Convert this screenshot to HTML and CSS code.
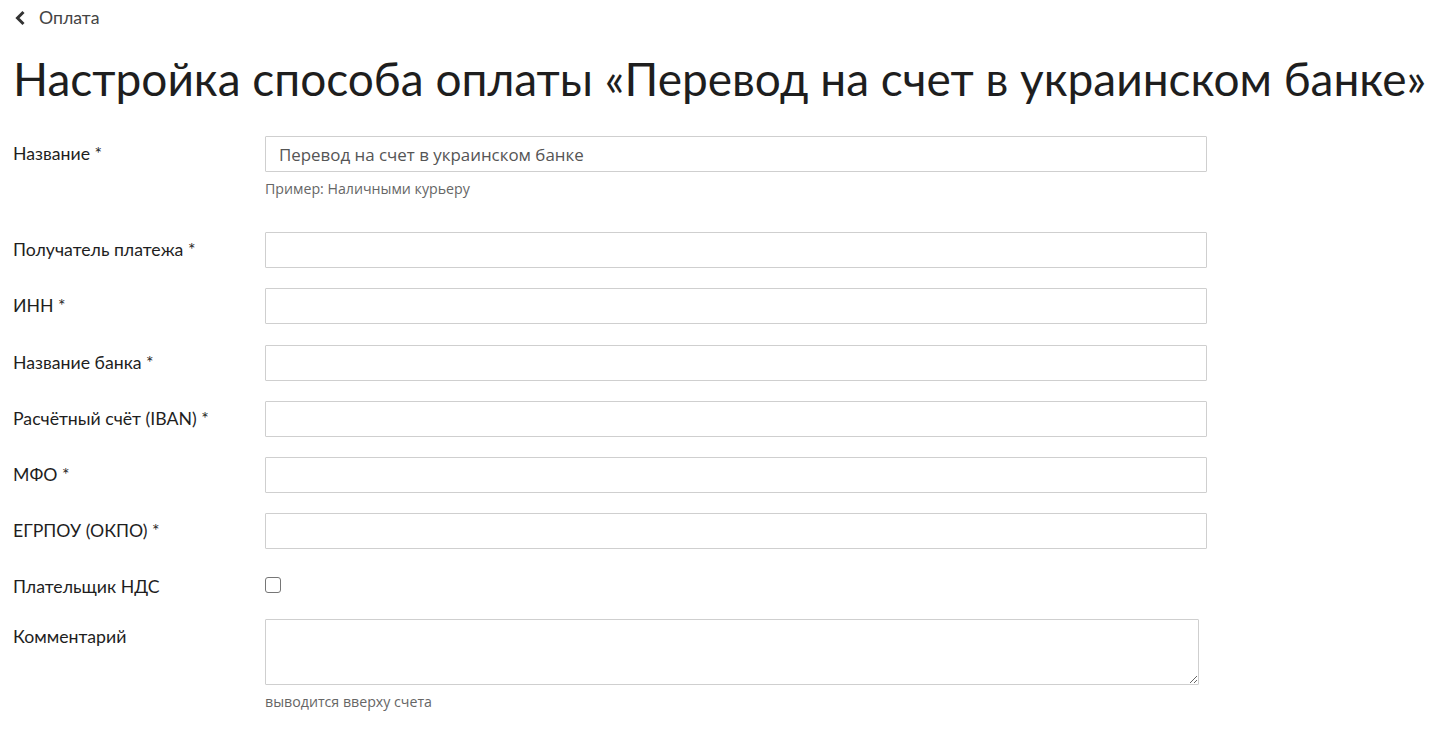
FILE: index.html
```html
<!DOCTYPE html>
<html lang="ru">
<head>
<meta charset="utf-8">
<title>Настройка способа оплаты</title>
<link rel="stylesheet" href="styles.css">
</head>
<body>
<div class="page">
  <a class="back" href="#">
    <svg class="back-icon" width="12" height="16" viewBox="0 0 12 16"><path d="M9.5 2 L3.5 8 L9.5 14" fill="none" stroke="#333" stroke-width="3" stroke-linejoin="miter"/></svg>
    <span>Оплата</span>
  </a>
  <h1 class="title">Настройка способа оплаты «Перевод на счет в украинском банке»</h1>
  <form class="form">
    <div class="row">
      <label class="label">Название *</label>
      <div class="field">
        <input class="input" type="text" value="Перевод на счет в украинском банке">
        <div class="hint hint-first">Пример: Наличными курьеру</div>
      </div>
    </div>
    <div class="row">
      <label class="label">Получатель платежа *</label>
      <div class="field"><input class="input" type="text"></div>
    </div>
    <div class="row">
      <label class="label">ИНН *</label>
      <div class="field"><input class="input" type="text"></div>
    </div>
    <div class="row">
      <label class="label">Название банка *</label>
      <div class="field"><input class="input" type="text"></div>
    </div>
    <div class="row">
      <label class="label">Расчётный счёт (IBAN) *</label>
      <div class="field"><input class="input" type="text"></div>
    </div>
    <div class="row">
      <label class="label">МФО *</label>
      <div class="field"><input class="input" type="text"></div>
    </div>
    <div class="row">
      <label class="label">ЕГРПОУ (ОКПО) *</label>
      <div class="field"><input class="input" type="text"></div>
    </div>
    <div class="row row-check">
      <label class="label">Плательщик НДС</label>
      <div class="field field-check"><span class="checkbox"></span></div>
    </div>
    <div class="row">
      <label class="label">Комментарий</label>
      <div class="field">
        <textarea class="textarea"></textarea>
        <div class="hint">выводится вверху счета</div>
      </div>
    </div>
  </form>
</div>
</body>
</html>
```
FILE: styles.css
```css
html, body {
  margin: 0;
  padding: 0;
  background: #fff;
}
body {
  font-family: Lato, "Open Sans", sans-serif;
  color: #222;
}
.page {
  padding: 5px 0 0 13px;
}
.back {
  display: inline-flex;
  align-items: center;
  gap: 13px;
  color: #444;
  text-decoration: none;
  font-size: 17.7px;
  line-height: 26px;
}
.back-icon {
  display: block;
  margin-left: 1px;
}
.title {
  font-weight: 400;
  font-size: 46px;
  line-height: 56px;
  margin: 20px 0 29px;
  color: #1e1e1e;
  white-space: nowrap;
}
.form {
  width: 1194px;
}
.row {
  display: flex;
  margin-bottom: 20.2px;
}
.label {
  width: 252px;
  flex: none;
  font-size: 17.7px;
  line-height: 36px;
  color: #1e1e1e;
}
.field {
  width: 942px;
}
.input {
  display: block;
  box-sizing: border-box;
  width: 942px;
  height: 36px;
  border: 1px solid #cfcfcf;
  border-radius: 1px;
  padding: 0 13px;
  font-family: "Open Sans", sans-serif;
  font-size: 16.9px;
  color: #555;
  background: #fff;
  outline: none;
}
.hint {
  font-family: "Open Sans", sans-serif;
  font-size: 14.2px;
  color: #666;
  line-height: 18px;
  margin-top: 8px;
}
.hint-first {
  margin-bottom: 14px;
}
.row-check {
  margin-bottom: 14px;
}
.field-check {
  display: flex;
  align-items: center;
  height: 32px;
}
.checkbox {
  display: block;
  box-sizing: border-box;
  width: 16px;
  height: 16px;
  border: 1px solid #767676;
  border-radius: 3px;
  background: #fff;
}
.textarea {
  display: block;
  box-sizing: border-box;
  width: 934px;
  height: 66px;
  border: 1px solid #cfcfcf;
  border-radius: 1px;
  resize: both;
  font-family: "Open Sans", sans-serif;
  font-size: 15px;
  outline: none;
}
```
